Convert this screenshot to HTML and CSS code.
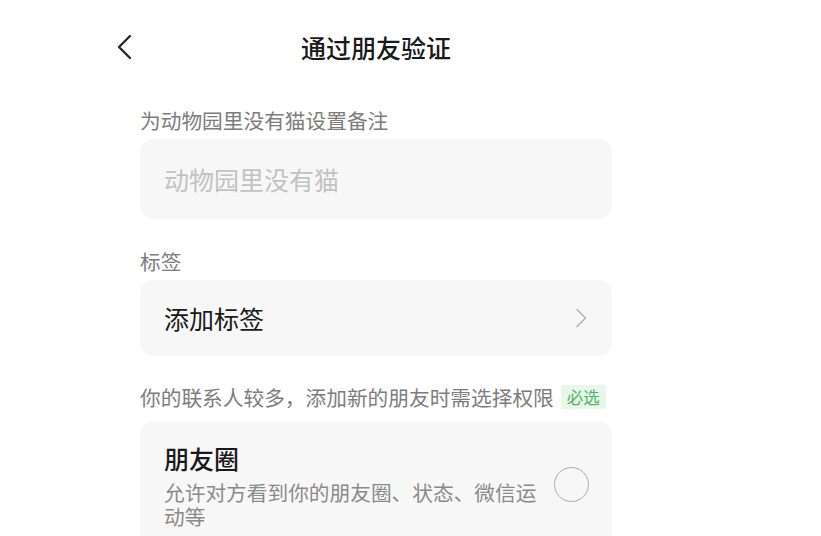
FILE: index.html
```html
<!DOCTYPE html>
<html lang="zh-CN">
<head>
<meta charset="utf-8">
<title>通过朋友验证</title>
<link rel="stylesheet" href="styles.css">
</head>
<body>
<div class="page">
  <header class="header">
    <div class="back">
      <svg width="16" height="26" viewBox="0 0 16 26"><path d="M14 2 L3 13 L14 24" fill="none" stroke="#222" stroke-width="2.2" stroke-linecap="round" stroke-linejoin="round"/></svg>
    </div>
    <h1 class="title">通过朋友验证</h1>
    <div></div>
  </header>
  <main class="content">
    <div class="label label-first">为动物园里没有猫设置备注</div>
    <div class="card input-card">
      <span class="placeholder">动物园里没有猫</span>
    </div>

    <div class="label label-gap">标签</div>
    <div class="card tag-card">
      <span class="tag-text">添加标签</span>
      <svg class="chev" width="12" height="20" viewBox="0 0 12 20"><path d="M2 1.5 L10.5 10 L2 18.5" fill="none" stroke="#b4b4b4" stroke-width="1.6" stroke-linecap="round" stroke-linejoin="round"/></svg>
    </div>

    <div class="label label-gap label-row">你的联系人较多，添加新的朋友时需选择权限<span class="badge">必选</span></div>
    <div class="card perm-card">
      <div class="perm-text">
        <div class="perm-title">朋友圈</div>
        <div class="perm-desc">允许对方看到你的朋友圈、状态、微信运动等</div>
      </div>
      <span class="radio"></span>
    </div>
  </main>
</div>
</body>
</html>
```

FILE: styles.css
```css
* { box-sizing: border-box; }
html, body { margin: 0; padding: 0; background: #ffffff; }
body {
  font-family: "Noto Sans CJK SC", "Noto Sans", sans-serif;
  color: #191919;
  width: 821px;
  height: 536px;
  overflow: hidden;
}
.page {
  padding-left: 108px;
  width: 536px;
  box-sizing: content-box;
}
.header {
  display: grid;
  grid-template-columns: 1fr auto 1fr;
  align-items: center;
  height: 54px;
  margin-top: 20px;
}
.back {
  display: flex;
  align-items: center;
  padding-left: 8px;
}
.back svg { display: block; }
.title {
  margin: 0;
  font-size: 25px;
  font-weight: 500;
  line-height: 34px;
  color: #1a1a1a;
  letter-spacing: 0;
}
.content {
  padding-left: 32px;
  width: 504px;
}
.label {
  font-size: 20.7px;
  line-height: 28px;
  color: #7d7d7d;
}
.label-first { margin-top: 32px; }
.label-gap { margin-top: 28px; }
.card {
  background: #f7f7f7;
  border-radius: 13px;
  margin-top: 5px;
  width: 472px;
}
.input-card {
  height: 80px;
  display: flex;
  align-items: center;
  padding: 0 24px;
}
.placeholder {
  font-size: 25px;
  color: #c2c2c2;
  line-height: 34px;
}
.tag-card {
  height: 76px;
  display: flex;
  align-items: center;
  justify-content: space-between;
  padding: 0 25px 0 24px;
}
.tag-text {
  font-size: 25px;
  line-height: 34px;
  color: #1a1a1a;
}
.chev { display: block; }
.label-row {
  display: flex;
  align-items: center;
  margin-top: 27px;
}
.badge {
  display: inline-block;
  margin-left: 7px;
  background: #e9f6ec;
  color: #4db664;
  font-size: 16.5px;
  line-height: 24px;
  height: 24px;
  padding: 0 6px;
  border-radius: 2px;
}
.perm-card {
  margin-top: 11px;
  display: flex;
  gap: 12px;
  padding: 20px 23px 14px 24px;
  height: 140px;
  align-items: flex-start;
}
.perm-text {
  flex: 1;
}
.perm-title {
  font-size: 25px;
  line-height: 32px;
  font-weight: 500;
  color: #1a1a1a;
}
.perm-desc {
  margin-top: 6px;
  font-size: 20.7px;
  line-height: 24px;
  color: #8a8a8a;
}
.radio {
  flex: none;
  width: 35px;
  height: 35px;
  border-radius: 50%;
  border: 1.6px solid #ababab;
  margin-top: 25px;
}
```
